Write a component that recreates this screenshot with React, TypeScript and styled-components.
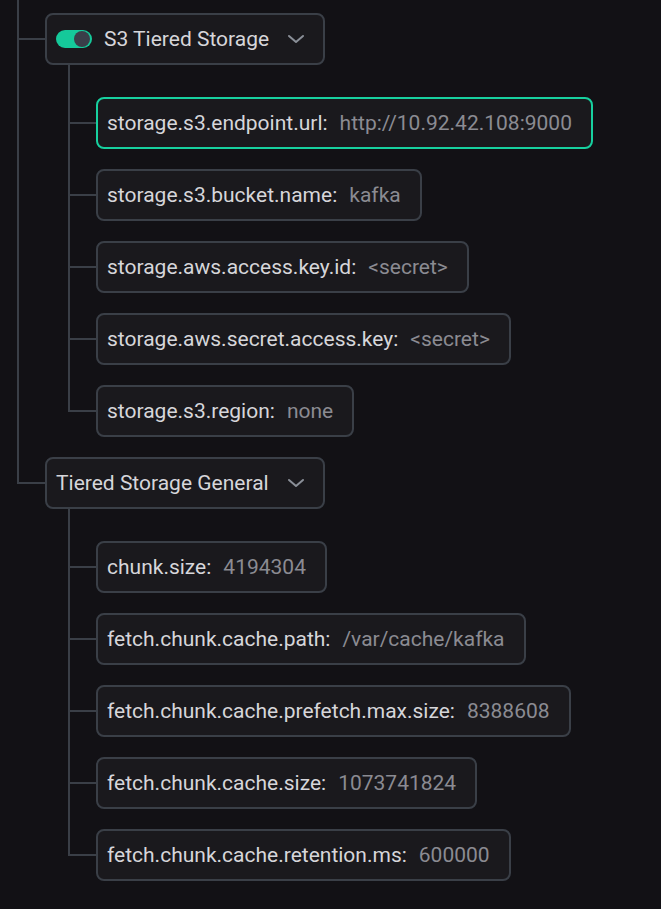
import React from 'react';
import styled, { createGlobalStyle, css } from 'styled-components';

const GlobalStyle = createGlobalStyle`
  html, body {
    margin: 0;
    padding: 0;
    background: #121115;
  }
  body {
    font-family: Roboto, "Liberation Sans", sans-serif;
    color: #d4d4d8;
  }
`;

interface Setting {
  name: string;
  value: string;
  active?: boolean;
}

interface Group {
  title: string;
  toggle?: boolean;
  items: Setting[];
}

const groups: Group[] = [
  {
    title: 'S3 Tiered Storage',
    toggle: true,
    items: [
      { name: 'storage.s3.endpoint.url:', value: 'http://10.92.42.108:9000', active: true },
      { name: 'storage.s3.bucket.name:', value: 'kafka' },
      { name: 'storage.aws.access.key.id:', value: '<secret>' },
      { name: 'storage.aws.secret.access.key:', value: '<secret>' },
      { name: 'storage.s3.region:', value: 'none' },
    ],
  },
  {
    title: 'Tiered Storage General',
    items: [
      { name: 'chunk.size:', value: '4194304' },
      { name: 'fetch.chunk.cache.path:', value: '/var/cache/kafka' },
      { name: 'fetch.chunk.cache.prefetch.max.size:', value: '8388608' },
      { name: 'fetch.chunk.cache.size:', value: '1073741824' },
      { name: 'fetch.chunk.cache.retention.ms:', value: '600000' },
    ],
  },
];

const LINE = '#3a3f47';

const Page = styled.div`
  min-height: 909px;
  background: #121115;
`;

const Branches = styled.div<{ $lineLeft: number; $indent: number }>`
  display: flex;
  flex-direction: column;
  padding-left: ${(p) => p.$indent}px;
  --line-left: ${(p) => p.$lineLeft}px;
  --indent: ${(p) => p.$indent}px;
`;

const Branch = styled.div<{ $gap: number; $last?: boolean }>`
  position: relative;
  padding-top: ${(p) => p.$gap}px;

  &::before {
    content: '';
    position: absolute;
    left: calc(var(--line-left) - var(--indent));
    top: 0;
    width: 2px;
    background: ${LINE};
    ${(p) =>
      p.$last
        ? css`height: ${p.$gap + 27}px;`
        : css`bottom: 0;`}
  }

  &::after {
    content: '';
    position: absolute;
    left: calc(var(--line-left) - var(--indent));
    width: calc(var(--indent) - var(--line-left));
    top: ${(p) => p.$gap + 25}px;
    height: 2px;
    background: ${LINE};
  }
`;

const Box = styled.div<{ $active?: boolean }>`
  box-sizing: border-box;
  display: inline-flex;
  align-items: center;
  height: 52px;
  border: 2px solid ${(p) => (p.$active ? '#17d09f' : LINE)};
  border-radius: 8px;
  background: #1a191d;
  font-size: 21px;
  white-space: nowrap;
`;

const Header = styled(Box)`
  padding: 0 18px 0 9px;
  gap: 12px;
  color: #d6d6da;
`;

const Field = styled(Box)`
  padding: 0 19px 0 9px;
`;

const Key = styled.span`
  color: #d6d6da;
`;

const Value = styled.span`
  margin-left: 12px;
  color: #8b8b92;
`;

const Toggle = styled.span<{ $on?: boolean }>`
  position: relative;
  display: inline-block;
  flex: none;
  width: 36px;
  height: 18px;
  border-radius: 9px;
  background: ${(p) => (p.$on ? '#15c99a' : '#3a3f47')};

  &::after {
    content: '';
    position: absolute;
    top: 1px;
    ${(p) => (p.$on ? 'right: 2px;' : 'left: 2px;')}
    width: 16px;
    height: 16px;
    border-radius: 50%;
    background: #3a3e49;
  }
`;

const Chevron = styled.svg`
  width: 18px;
  height: 10px;
  margin-left: 6px;
  flex: none;
`;

const Row = styled.div`
  display: flex;
`;

const GroupNode: React.FC<{ group: Group }> = ({ group }) => (
  <>
    <Row>
      <Header>
        {group.toggle && <Toggle $on />}
        <span>{group.title}</span>
        <Chevron viewBox="0 0 18 10" fill="none">
          <path
            d="M2 2 L9 8 L16 2"
            stroke="#8a8f98"
            strokeWidth="2"
            strokeLinecap="round"
            strokeLinejoin="round"
          />
        </Chevron>
      </Header>
    </Row>
    <Branches $lineLeft={23} $indent={51}>
      {group.items.map((item, i) => (
        <Branch
          key={item.name}
          $gap={i === 0 ? 32 : 20}
          $last={i === group.items.length - 1}
        >
          <Row>
            <Field $active={item.active}>
              <Key>{item.name}</Key>
              <Value>{item.value}</Value>
            </Field>
          </Row>
        </Branch>
      ))}
    </Branches>
  </>
);

const App: React.FC = () => (
  <Page>
    <GlobalStyle />
    <Branches $lineLeft={17} $indent={45}>
      {groups.map((group, i) => (
        <Branch
          key={group.title}
          $gap={i === 0 ? 13 : 20}
          $last={i === groups.length - 1}
        >
          <GroupNode group={group} />
        </Branch>
      ))}
    </Branches>
  </Page>
);

export default App;
